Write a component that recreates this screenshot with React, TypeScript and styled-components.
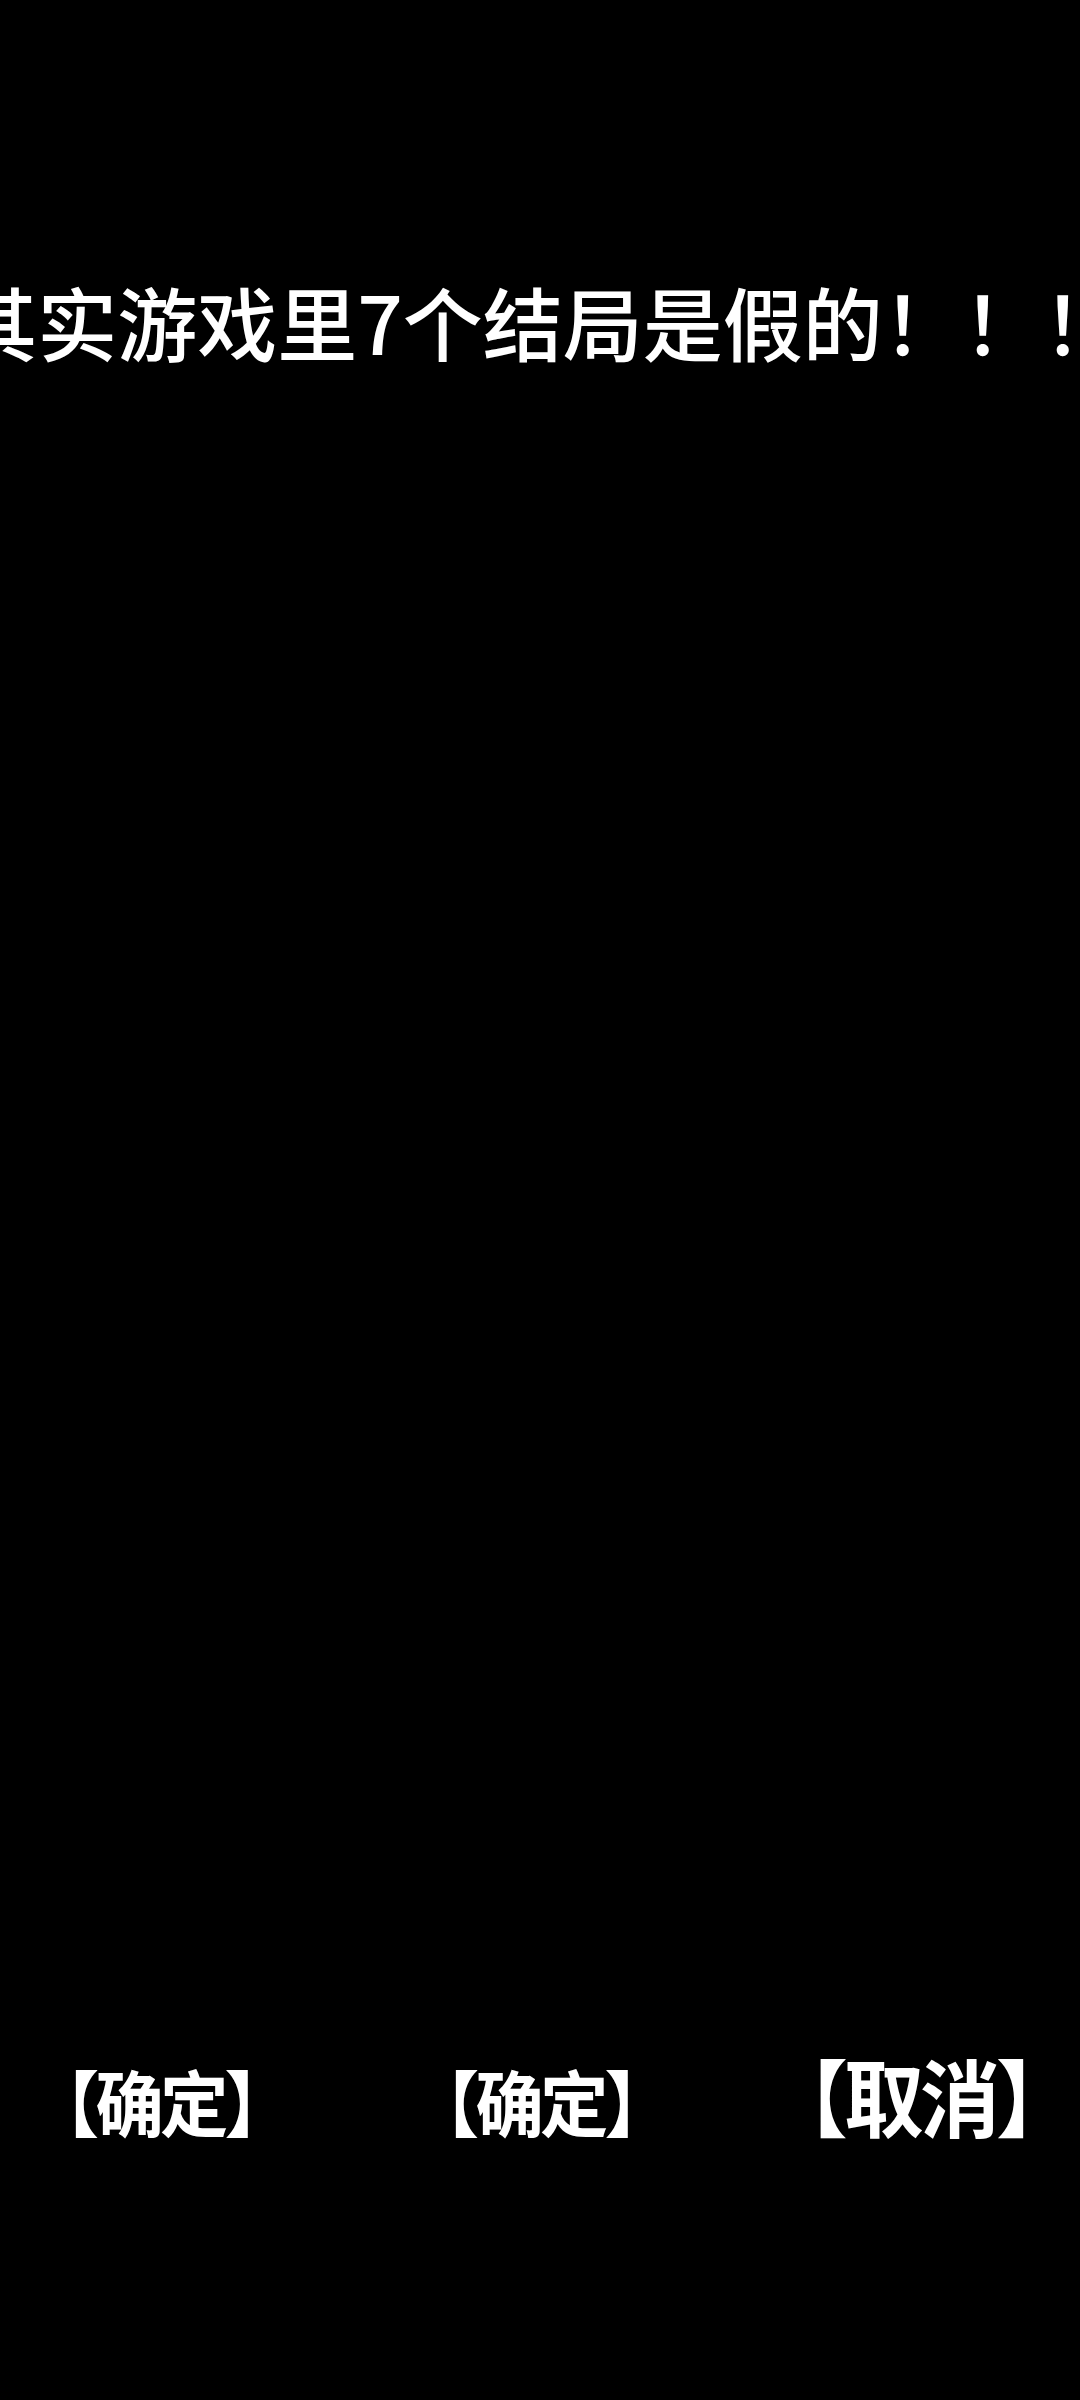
import styled, { createGlobalStyle } from 'styled-components';

const GlobalStyle = createGlobalStyle`
  html, body {
    margin: 0;
    padding: 0;
    background: #000;
  }
  body {
    font-family: "Noto Sans CJK SC", "Noto Sans", sans-serif;
    color: #fff;
  }
`;

const Page = styled.div`
  width: 1080px;
  height: 2400px;
  overflow: hidden;
  background: #000;
  display: flex;
  flex-direction: column;
`;

const Title = styled.div`
  padding-top: 280px;
  display: flex;
  justify-content: center;
  white-space: nowrap;
  font-size: 80px;
  line-height: 1;
  font-weight: 500;
  color: #fff;
`;

const Actions = styled.div`
  margin-top: auto;
  padding-bottom: 263px;
  display: grid;
  grid-template-columns: repeat(3, 380px);
  justify-content: center;
  align-items: baseline;
`;

const Choice = styled.div<{ $size: number }>`
  display: flex;
  justify-content: center;
  font-size: ${(p) => p.$size}px;
  line-height: 1;
  font-weight: 700;
  white-space: nowrap;

  span {
    display: inline-block;
    transform: scaleX(0.95);
    letter-spacing: -4px;
  }
`;

export default function App() {
  return (
    <>
      <GlobalStyle />
      <Page>
        <Title>其实游戏里7个结局是假的！！！</Title>
        <Actions>
          <Choice $size={72}>
            <span>【确定】</span>
          </Choice>
          <Choice $size={72}>
            <span>【确定】</span>
          </Choice>
          <Choice $size={84}>
            <span>【取消】</span>
          </Choice>
        </Actions>
      </Page>
    </>
  );
}
